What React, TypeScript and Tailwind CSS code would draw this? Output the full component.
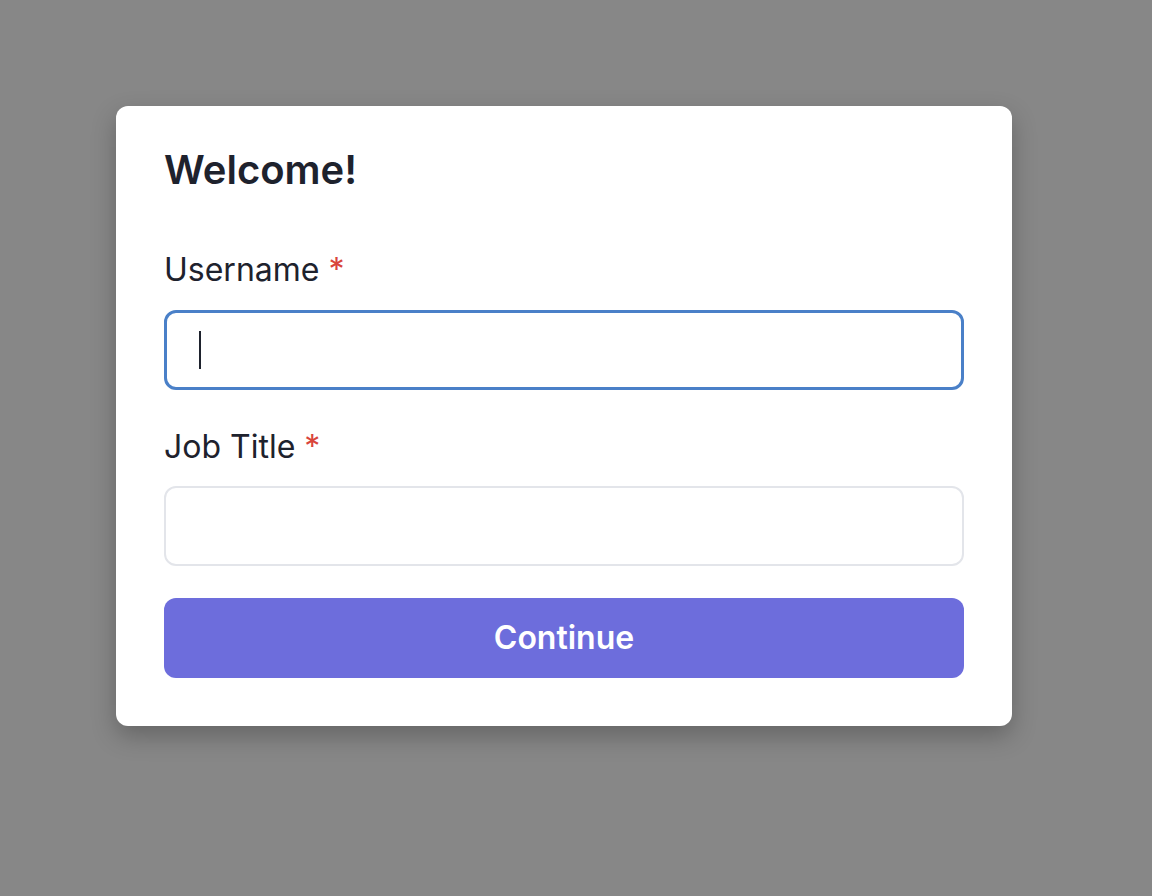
import React from "react";

export default function App() {
  return (
    <div className="min-h-[896px] w-full bg-[#878787] pt-[106px] pl-[116px]" style={{ fontFamily: "Inter, 'Noto Sans', sans-serif" }}>
      <div className="w-[896px] bg-white rounded-[12px] px-[48px] pt-[40px] pb-[48px] shadow-[0_10px_25px_rgba(0,0,0,0.25)] flex flex-col">
        <h1 className="text-[40px] leading-[48px] font-semibold text-[#1e222d]">Welcome!</h1>
        <label className="mt-[56px] text-[32px] leading-[40px] text-[#1e222d]">
          Username <span className="text-[#d9453b]">*</span>
        </label>
        <div className="mt-[20px] h-[80px] rounded-[12px] border-[3px] border-[#4a80c8] flex items-center pl-[32px]">
          <div className="w-[2px] h-[38px] bg-[#1e222d]" />
        </div>
        <label className="mt-[37px] text-[32px] leading-[40px] text-[#1e222d]">
          Job Title <span className="text-[#d9453b]">*</span>
        </label>
        <div className="mt-[19px] h-[80px] rounded-[12px] border-2 border-[#e3e5ea]" />
        <button className="mt-[32px] h-[80px] rounded-[12px] bg-[#6d6ddc] text-white text-[32px] font-semibold">
          Continue
        </button>
      </div>
    </div>
  );
}
